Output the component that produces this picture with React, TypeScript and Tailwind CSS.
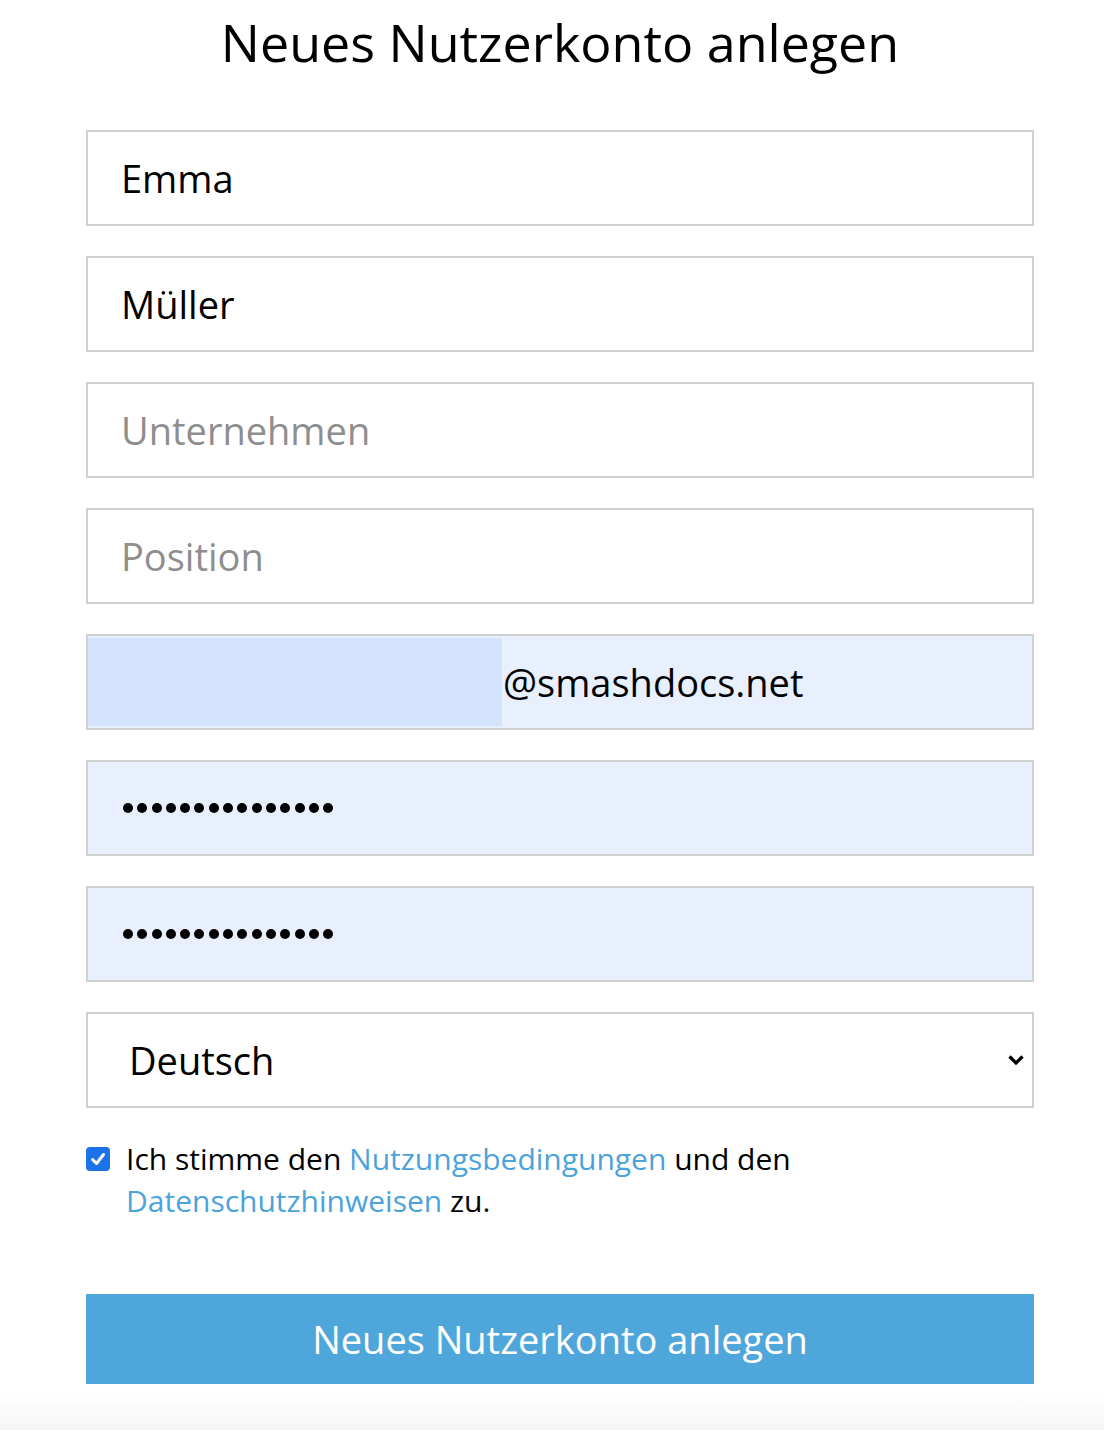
import React from "react";

const fieldBase =
  "h-[96px] w-full border-2 border-[#d0d0d0] flex items-center text-[38px] font-['Open_Sans',sans-serif]";

function Dots() {
  return (
    <div className="flex gap-[4.3px]">
      {Array.from({ length: 15 }).map((_, i) => (
        <span key={i} className="block w-[10px] h-[10px] rounded-full bg-black" />
      ))}
    </div>
  );
}

export default function App() {
  return (
    <div className="min-h-[1430px] bg-white font-['Open_Sans',sans-serif] text-black overflow-hidden">
      <div className="pl-[86px] w-[1034px]">
        <h1 className="h-[130px] text-center text-[52px] leading-[84px]">
          Neues Nutzerkonto anlegen
        </h1>

        <div className="flex flex-col gap-[30px]">
          <div className={`${fieldBase} pl-[33px]`}>Emma</div>
          <div className={`${fieldBase} pl-[33px]`}>Müller</div>
          <div className={`${fieldBase} pl-[33px] text-[#8e8e8e]`}>Unternehmen</div>
          <div className={`${fieldBase} pl-[33px] text-[#8e8e8e]`}>Position</div>
          <div className={`${fieldBase} bg-[#e8f0fe] p-[2px] pl-0`}>
            <div className="h-full w-[414px] bg-[#d3e3fd]" />
            <span className="ml-px">@smashdocs.net</span>
          </div>
          <div className={`${fieldBase} bg-[#e8f0fe] pl-[35px]`}>
            <Dots />
          </div>
          <div className={`${fieldBase} bg-[#e8f0fe] pl-[35px]`}>
            <Dots />
          </div>
          <div className={`${fieldBase} pl-[41px] pr-[7px] justify-between`}>
            <span>Deutsch</span>
            <svg width="18" height="12" viewBox="0 0 18 12">
              <path d="M2.5 2.5 L9 9 L15.5 2.5" fill="none" stroke="#000" strokeWidth="3.2" />
            </svg>
          </div>
        </div>

        <div className="mt-[30px] flex items-start gap-[16px] text-[30px] leading-[42px]">
          <span className="mt-[9px] shrink-0 w-[24px] h-[24px] rounded-[4px] bg-[#1a73e8] flex items-center justify-center">
            <svg width="18" height="18" viewBox="0 0 18 18">
              <path d="M3.5 9.5 L7.5 13.5 L14.5 4.5" fill="none" stroke="#fff" strokeWidth="3" strokeLinecap="round" strokeLinejoin="round" />
            </svg>
          </span>
          <p className="w-[700px]">
            Ich stimme den <span className="text-[#4ca3dc]">Nutzungsbedingungen</span> und den{" "}
            <span className="text-[#4ca3dc]">Datenschutzhinweisen</span> zu.
          </p>
        </div>

        <button className="mt-[72px] h-[90px] w-full bg-[#4fa6db] text-white text-[38px] leading-[86px]">
          Neues Nutzerkonto anlegen
        </button>
      </div>
      <div className="mt-[10px] h-[40px] ml-[-60px] w-[1200px] rounded-tl-[120px] bg-gradient-to-b from-white to-[#f4f4f4]" />
    </div>
  );
}
